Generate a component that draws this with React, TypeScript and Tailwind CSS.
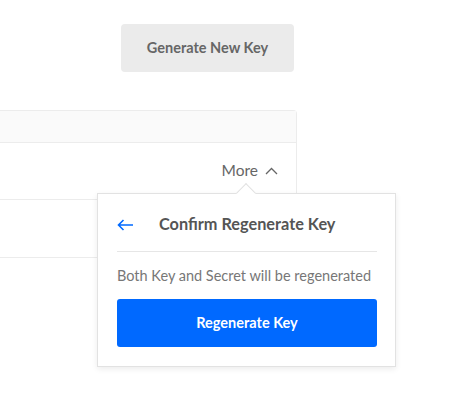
import React from "react";

export default function App() {
  return (
    <div
      className="relative w-[476px] h-[414px] bg-white overflow-hidden"
      style={{ fontFamily: '"Lato", "Open Sans", sans-serif' }}
    >
      <div className="pt-[24px] pl-[121px]">
        <button className="w-[173px] h-[48px] rounded-[4px] bg-[#ebebeb] text-[14.5px] font-bold text-[#666] flex items-center justify-center">
          Generate New Key
        </button>
      </div>

      <div className="mt-[38px] w-[297px] border-t border-r border-b border-[#ececec] rounded-tr-[4px]">
        <div className="h-[32px] bg-[#fafafa] border-b border-[#ececec]" />
        <div className="h-[57px] flex items-center justify-end pr-[18px] border-b border-[#ececec]">
          <span className="text-[15.5px] text-[#666]">More</span>
          <svg className="ml-[7px]" width="13" height="8" viewBox="0 0 13 8" fill="none">
            <path d="M1 7L6.5 1.5L12 7" stroke="#666" strokeWidth="1.3" />
          </svg>
        </div>
        <div className="h-[57px]" />
      </div>

      <div className="absolute left-[97px] top-[193px] w-[299px] h-[174px] bg-white border border-[#e2e2e2] shadow-[0_2px_6px_rgba(0,0,0,0.08)] pl-[19px] pr-[18px]">
        <div className="absolute left-[141px] top-[-8px] w-[14px] h-[14px] rotate-45 bg-white border-l border-t border-[#e2e2e2]" />
        <div className="relative h-[58px] flex items-center border-b border-[#e6e6e6] pt-[4px]">
          <svg width="17" height="12" viewBox="0 0 17 12" fill="none">
            <path d="M16 6H1.5M6.5 1L1.5 6L6.5 11" stroke="#0069ff" strokeWidth="1.6" />
          </svg>
          <span className="ml-[25px] text-[16.3px] font-bold text-[#555]">Confirm Regenerate Key</span>
        </div>
        <div className="h-[47px] flex items-center text-[14.5px] text-[#777]">
          Both Key and Secret will be regenerated
        </div>
        <button className="w-full h-[48px] rounded-[3px] bg-[#0069ff] text-white text-[14.5px] font-bold flex items-center justify-center">
          Regenerate Key
        </button>
      </div>
    </div>
  );
}
